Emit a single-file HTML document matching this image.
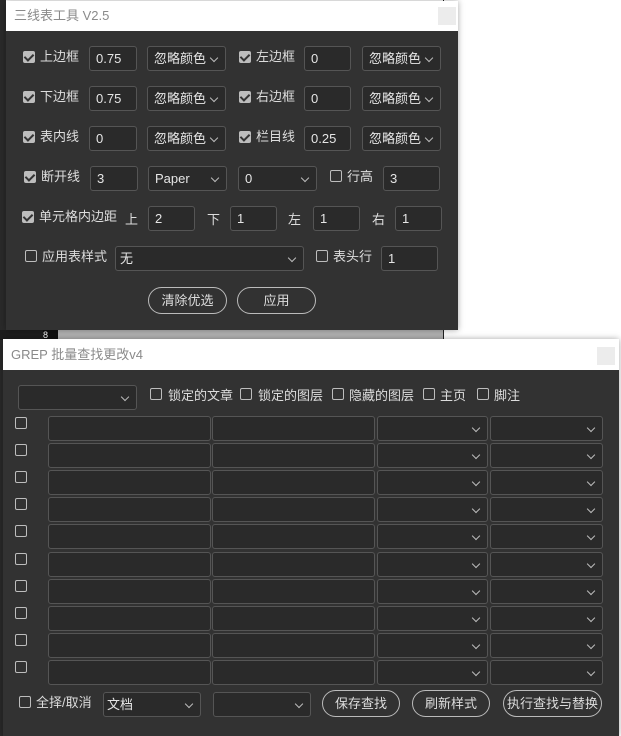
<!DOCTYPE html>
<html><head><meta charset="utf-8"><style>
*{box-sizing:border-box;margin:0;padding:0}
body{width:621px;height:736px;overflow:hidden;background:#fff;position:relative;font-family:"Liberation Sans","Noto Sans CJK SC",sans-serif;font-size:13px;color:#ddd}
.a{position:absolute}
.win{background:#323232;box-shadow:0 0 6px rgba(0,0,0,.35)}
.tb{background:#fff;color:#8a8a8a;font-size:13px;padding-left:8px;line-height:30px}
.cls{position:absolute;width:18px;height:18px;background:#ececec;top:6px}
.in{position:absolute;background:#2a2a2a;border:1px solid #555;border-radius:3px;height:25px;line-height:23px;padding-left:6px;font-size:13px;color:#e6e6e6;overflow:hidden;white-space:nowrap}
.sel{padding-right:18px}
.sel:after{content:"";position:absolute;right:8px;top:8px;width:5px;height:5px;border-right:1px solid #bbb;border-bottom:1px solid #bbb;transform:rotate(45deg)}
.cb{position:absolute;width:12px;height:12px;border:1px solid #bdbdbd;border-radius:2px}
.cbk{position:absolute;width:12px;height:12px;background:#bdbdbd;border-radius:2px}
.cbk:after{content:"";position:absolute;left:3px;top:1px;width:4px;height:7px;border-right:2px solid #333;border-bottom:2px solid #333;transform:rotate(45deg)}
.lb{position:absolute;font-size:13px;color:#ddd;line-height:16px}
.btn{position:absolute;border:1px solid #bbb;border-radius:14px;height:27px;line-height:25px;text-align:center;color:#ddd;font-size:13px}
</style></head><body>
<div class="a" style="left:0;top:0;width:6px;height:340px;background:#2a2a2a"></div>
<div class="a" style="left:0;top:330px;width:58px;height:10px;background:#1e1e1e"></div>
<div class="a" style="left:43px;top:330px;width:15px;height:10px;background:#111;color:#fff;font-size:9px;line-height:10px">8</div>
<div class="a" style="left:58px;top:330px;width:385px;height:10px;background:#b3b3b3"></div>
<div class="a" style="left:443px;top:0;width:1px;height:340px;background:#222"></div>
<div class="a" style="left:0;top:340px;width:4px;height:396px;background:#2a2a2a"></div>

<div class="a win" style="left:6px;top:1px;width:452px;height:329px">
<div class="tb" style="height:30px">三线表工具 V2.5</div>
<div class="cls" style="left:432px"></div>
</div>
<div class="cbk" style="left:23px;top:51px"></div><div class="lb" style="left:40px;top:49px">上边框</div>
<div class="in" style="left:89px;top:46px;width:48px">0.75</div>
<div class="in sel" style="left:147px;top:46px;width:79px">忽略颜色</div>
<div class="cbk" style="left:239px;top:51px"></div><div class="lb" style="left:256px;top:49px">左边框</div>
<div class="in" style="left:304px;top:46px;width:47px">0</div>
<div class="in sel" style="left:362px;top:46px;width:79px">忽略颜色</div>

<div class="cbk" style="left:23px;top:91px"></div><div class="lb" style="left:40px;top:89px">下边框</div>
<div class="in" style="left:89px;top:86px;width:48px">0.75</div>
<div class="in sel" style="left:147px;top:86px;width:79px">忽略颜色</div>
<div class="cbk" style="left:239px;top:91px"></div><div class="lb" style="left:256px;top:89px">右边框</div>
<div class="in" style="left:304px;top:86px;width:47px">0</div>
<div class="in sel" style="left:362px;top:86px;width:79px">忽略颜色</div>

<div class="cbk" style="left:23px;top:131px"></div><div class="lb" style="left:40px;top:129px">表内线</div>
<div class="in" style="left:89px;top:126px;width:48px">0</div>
<div class="in sel" style="left:147px;top:126px;width:79px">忽略颜色</div>
<div class="cbk" style="left:239px;top:131px"></div><div class="lb" style="left:256px;top:129px">栏目线</div>
<div class="in" style="left:304px;top:126px;width:47px">0.25</div>
<div class="in sel" style="left:362px;top:126px;width:79px">忽略颜色</div>

<div class="cbk" style="left:24px;top:171px"></div><div class="lb" style="left:41px;top:169px">断开线</div>
<div class="in" style="left:90px;top:166px;width:48px">3</div>
<div class="in sel" style="left:148px;top:166px;width:79px">Paper</div>
<div class="in sel" style="left:238px;top:166px;width:79px">0</div>
<div class="cb" style="left:330px;top:170px"></div><div class="lb" style="left:347px;top:169px">行高</div>
<div class="in" style="left:383px;top:166px;width:57px">3</div>

<div class="cbk" style="left:22px;top:211px"></div><div class="lb" style="left:39px;top:209px">单元格内边距</div>
<div class="lb" style="left:125px;top:212px">上</div>
<div class="in" style="left:148px;top:206px;width:47px">2</div>
<div class="lb" style="left:207px;top:212px">下</div>
<div class="in" style="left:230px;top:206px;width:47px">1</div>
<div class="lb" style="left:288px;top:212px">左</div>
<div class="in" style="left:313px;top:206px;width:47px">1</div>
<div class="lb" style="left:372px;top:212px">右</div>
<div class="in" style="left:395px;top:206px;width:47px">1</div>

<div class="cb" style="left:25px;top:250px"></div><div class="lb" style="left:42px;top:249px">应用表样式</div>
<div class="in sel" style="left:115px;top:246px;width:189px;padding-left:4px">无</div>
<div class="cb" style="left:316px;top:250px"></div><div class="lb" style="left:333px;top:249px">表头行</div>
<div class="in" style="left:381px;top:246px;width:57px">1</div>

<div class="btn" style="left:148px;top:287px;width:79px">清除优选</div>
<div class="btn" style="left:237px;top:287px;width:79px">应用</div>

<div class="a win" style="left:3px;top:339px;width:616px;height:397px">
<div class="tb" style="height:31px;line-height:31px">GREP 批量查找更改v4</div>
<div class="cls" style="left:594px;top:8px"></div>
</div>
<div class="in sel" style="left:18px;top:385px;width:119px"></div>
<div class="cb" style="left:150px;top:388px"></div><div class="lb" style="left:168px;top:388px">锁定的文章</div>
<div class="cb" style="left:240px;top:388px"></div><div class="lb" style="left:258px;top:388px">锁定的图层</div>
<div class="cb" style="left:332px;top:388px"></div><div class="lb" style="left:349px;top:388px">隐藏的图层</div>
<div class="cb" style="left:423px;top:388px"></div><div class="lb" style="left:440px;top:388px">主页</div>
<div class="cb" style="left:477px;top:388px"></div><div class="lb" style="left:494px;top:388px">脚注</div>

<div id="rows"></div>
<script>
var h='';for(var i=0;i<10;i++){var y=416+i*27.1;
h+='<div class="cb" style="left:15px;top:'+(y+1)+'px"></div>'+
'<div class="in" style="left:48px;top:'+y+'px;width:163px"></div>'+
'<div class="in" style="left:212px;top:'+y+'px;width:163px"></div>'+
'<div class="in sel" style="left:377px;top:'+y+'px;width:111px;"></div>'+
'<div class="in sel" style="left:490px;top:'+y+'px;width:113px"></div>';}
document.getElementById('rows').innerHTML=h;
</script>

<div class="cb" style="left:19px;top:696px"></div><div class="lb" style="left:36px;top:695px">全择/取消</div>
<div class="in sel" style="left:103px;top:692px;width:98px;padding-left:3px">文档</div>
<div class="in sel" style="left:213px;top:692px;width:98px"></div>
<div class="btn" style="left:322px;top:690px;width:78px">保存查找</div>
<div class="btn" style="left:412px;top:690px;width:78px">刷新样式</div>
<div class="btn" style="left:503px;top:690px;width:99px">执行查找与替换</div>
</body></html>
